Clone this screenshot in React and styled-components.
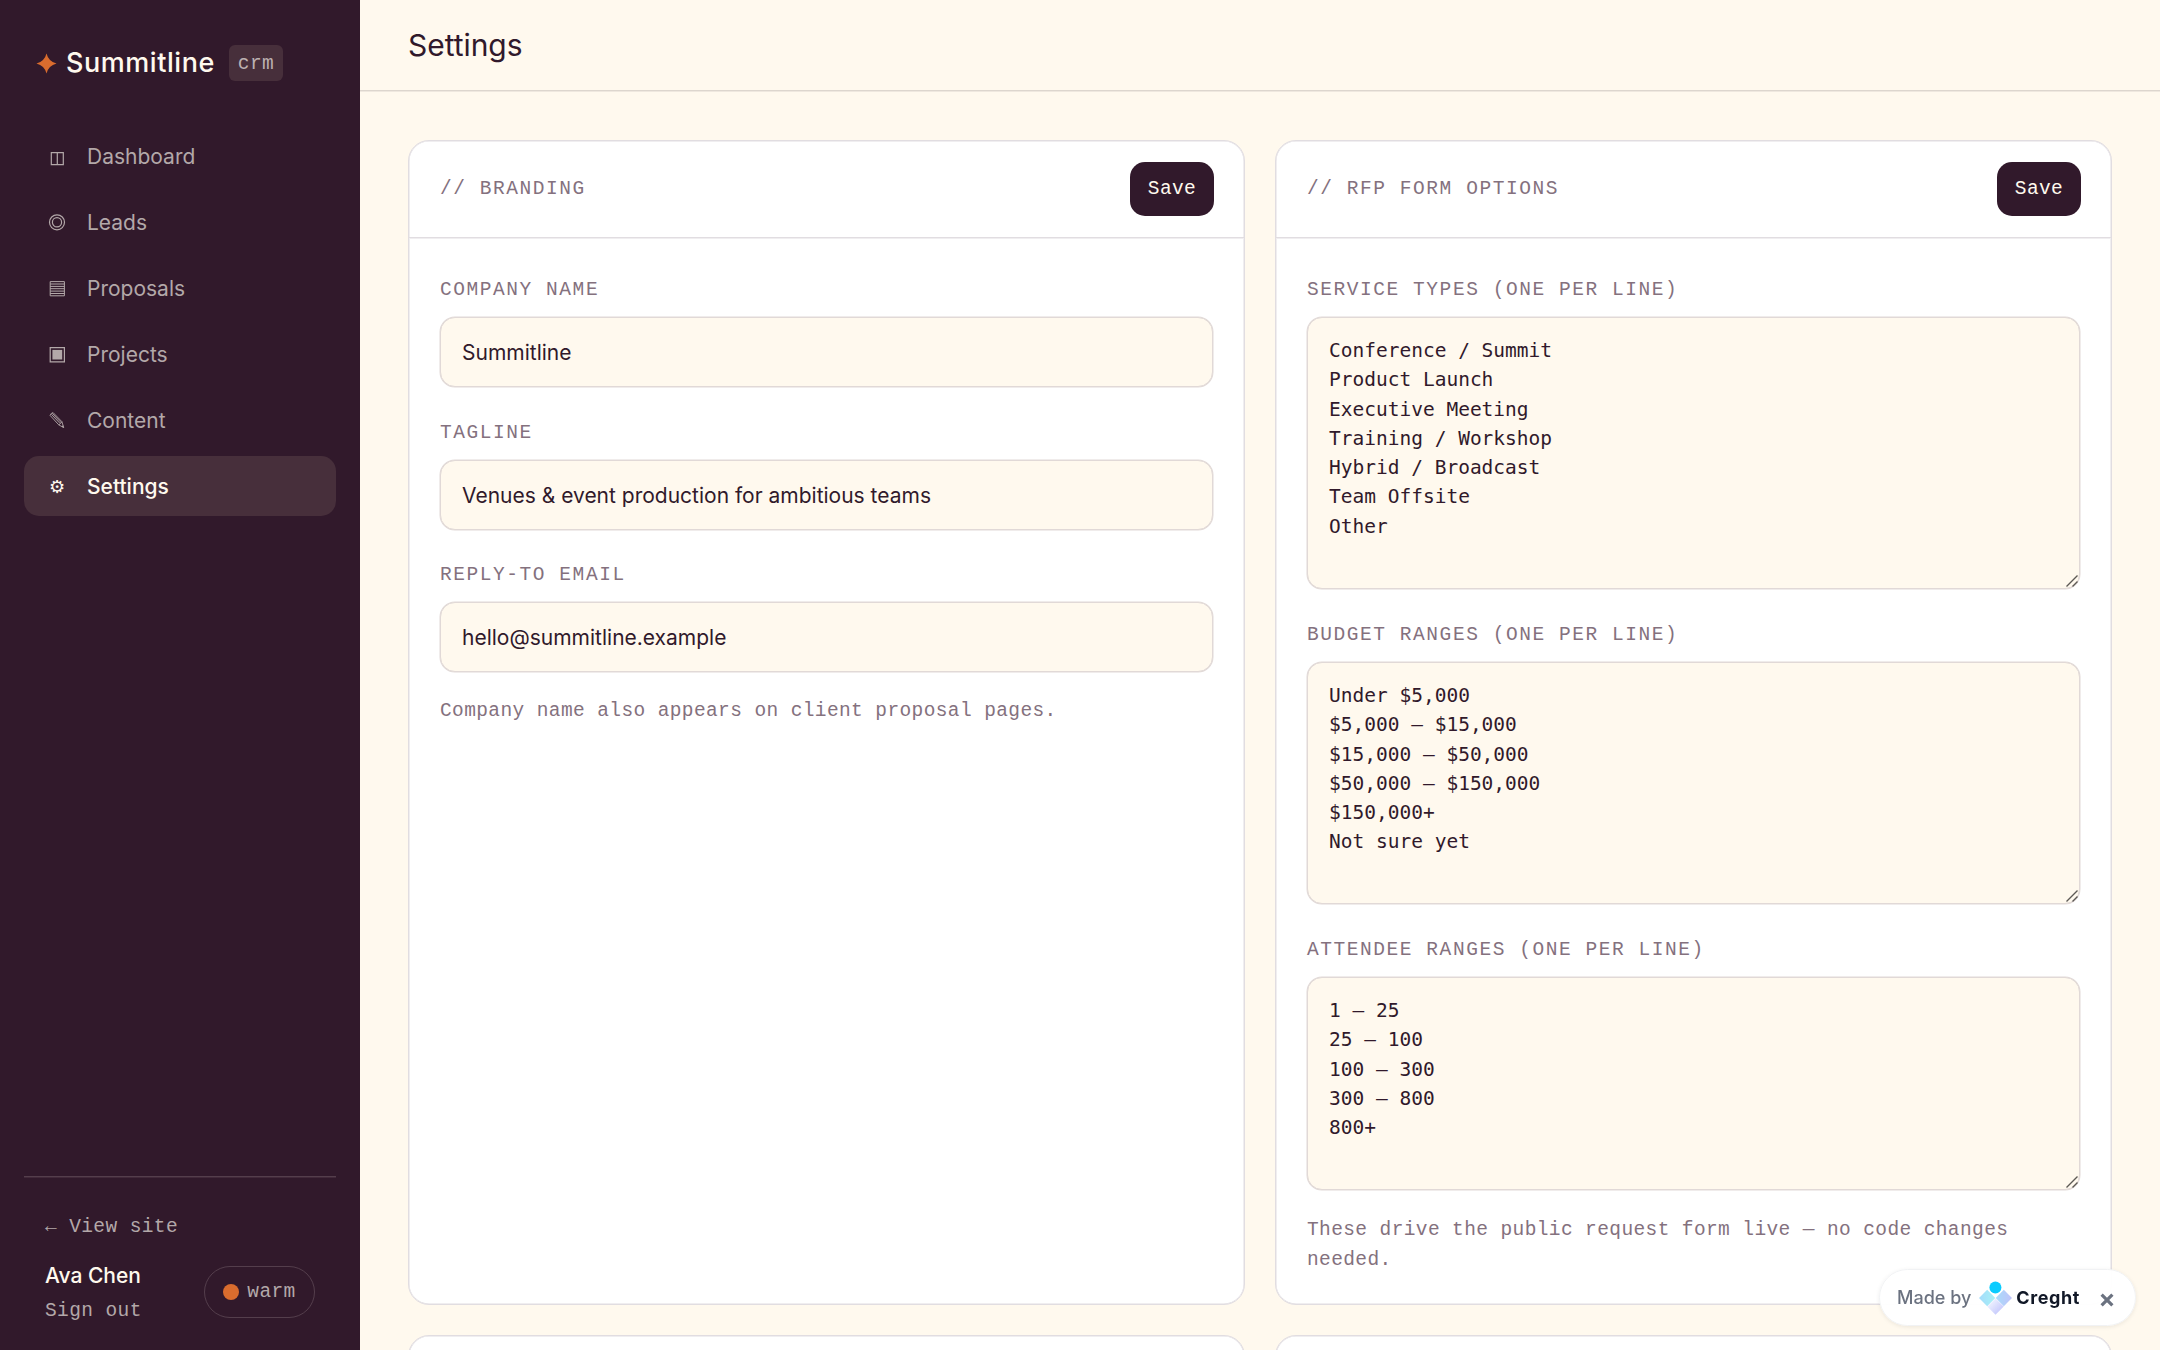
// Dependencies
import React from 'react';
import styled, { createGlobalStyle } from 'styled-components';

const GlobalStyle = createGlobalStyle`
  :root {
    --plum: #31192b;
    --cream: #fff9ee;
    --orange: #d96c2e;
    --muted: #84717e;
    --side-text: #b3a8a9;
    --line: #e1dde1;
    --sans: Inter, 'Liberation Sans', sans-serif;
    --display: Inter, 'Liberation Sans', sans-serif;
    --mono: 'Liberation Mono', monospace;
  }

  * {
    box-sizing: border-box;
  }

  body {
    margin: 0;
    background: var(--cream);
    color: var(--plum);
    font-family: var(--sans);
    -webkit-font-smoothing: antialiased;
  }
`;

const Layout = styled.div`
  display: flex;
  height: 1350px;
  overflow: hidden;
`;

const Sidebar = styled.aside`
  display: flex;
  flex-direction: column;
  flex: 0 0 360px;
  padding: 45px 24px 24px;
  background: var(--plum);
  color: var(--cream);
`;

const Brand = styled.div`
  display: flex;
  align-items: center;
  height: 36px;
  padding-left: 12px;
  margin-bottom: 45px;
`;

const Star = styled.svg`
  width: 21px;
  height: 21px;
  margin-right: 9px;
  fill: var(--orange);
`;

const BrandName = styled.span`
  width: 163px;
  padding-bottom: 2px;
  font-family: var(--display);
  font-size: 27px;
  font-weight: 500;
  letter-spacing: 0.55px;
`;

const Tag = styled.span`
  display: flex;
  align-items: center;
  justify-content: center;
  width: 54px;
  height: 36px;
  padding-top: 2px;
  border-radius: 6px;
  background: #472f3b;
  color: #bcb1b1;
  font-family: var(--mono);
  font-size: 19.5px;
  letter-spacing: 0.39px;
`;

const Nav = styled.nav`
  display: flex;
  flex-direction: column;
  gap: 6px;
`;

const NavItem = styled.a`
  display: flex;
  align-items: center;
  gap: 18px;
  height: 60px;
  padding: 0 21px;
  border-radius: 15px;
  background: ${({ $active }) => ($active ? '#472f3b' : 'transparent')};
  color: ${({ $active }) => ($active ? 'var(--cream)' : 'var(--side-text)')};
  font-size: 21px;
  font-weight: ${({ $active }) => ($active ? 500 : 400)};
`;

const NavIcon = styled.svg`
  width: 24px;
  height: 24px;
  fill: none;
  stroke: currentColor;
  stroke-width: 1.2;
`;

const NavGlyph = styled.span`
  width: 24px;
  font-family: 'DejaVu Sans', sans-serif;
  font-size: 18px;
  font-weight: 400;
  text-align: center;
`;

const SideFooter = styled.footer`
  display: flex;
  flex-direction: column;
  height: 150px;
  margin-top: auto;
  padding: 35px 21px 0;
  border-top: 1px solid #543e4c;
  box-shadow: inset 0 1px 0 #42293a;
`;

const SideLink = styled.a`
  color: var(--side-text);
  font-family: var(--mono);
  font-size: 19.5px;
  line-height: 30px;
  letter-spacing: 0.39px;
`;

const Account = styled.div`
  display: flex;
  align-items: center;
  justify-content: space-between;
  margin-top: 16px;
`;

const User = styled.div`
  display: flex;
  flex-direction: column;
  gap: 3px;
`;

const UserName = styled.span`
  font-size: 21px;
  font-weight: 500;
  line-height: 35px;
`;

const Theme = styled.button`
  display: flex;
  align-items: center;
  justify-content: center;
  gap: 8px;
  width: 111px;
  height: 52px;
  padding: 0;
  border: 1.5px solid #543e4c;
  border-radius: 26px;
  background: transparent;
  color: var(--side-text);
  font-family: var(--mono);
  font-size: 19.5px;
  letter-spacing: 0.39px;
`;

const Dot = styled.span`
  width: 16px;
  height: 16px;
  border-radius: 50%;
  background: var(--orange);
`;

const Page = styled.div`
  flex: 1;
  min-width: 0;
`;

const Topbar = styled.header`
  display: flex;
  align-items: center;
  height: 91px;
  padding: 0 48px;
  border-bottom: 1px solid #ddd6ce;
  box-shadow: 0 1px 0 #efe8df;
`;

const Title = styled.h1`
  margin: 0;
  font-family: var(--display);
  font-size: 30px;
  font-weight: 400;
  letter-spacing: -0.05px;
`;

const Content = styled.main`
  display: grid;
  grid-template-columns: 1fr 1fr;
  grid-template-rows: 1165px 300px;
  gap: 30px;
  padding: 49px 48px 0;
`;

const Panel = styled.section`
  border: 1px solid var(--line);
  border-radius: 21px;
  background: #fff;
  box-shadow: inset 0 0 0 0.5px var(--line);
`;

const PanelHead = styled.div`
  display: flex;
  align-items: center;
  justify-content: space-between;
  height: 97px;
  padding: 0 30px 0 31px;
  border-bottom: 1px solid var(--line);
  box-shadow: 0 1px 0 #f0eef0;
`;

const PanelTitle = styled.h2`
  margin: 0;
  color: var(--muted);
  font-family: var(--mono);
  font-size: 19.5px;
  font-weight: 400;
  letter-spacing: 1.56px;
  text-transform: uppercase;
`;

const Save = styled.button`
  width: 84px;
  height: 54px;
  padding: 0;
  border: none;
  border-radius: 15px;
  background: var(--plum);
  color: var(--cream);
  font-family: var(--mono);
  font-size: 19.5px;
  letter-spacing: 0.39px;
`;

const PanelBody = styled.div`
  padding: 37px 31px 30px;
`;

const Field = styled.label`
  display: block;
  margin-bottom: ${({ $gap }) => $gap}px;
`;

const Label = styled.span`
  display: block;
  height: 30px;
  margin-bottom: 12px;
  color: var(--muted);
  font-family: var(--mono);
  font-size: 19.5px;
  line-height: 30px;
  letter-spacing: 1.56px;
  text-transform: uppercase;
`;

const Input = styled.input`
  display: block;
  width: 100%;
  height: 70px;
  padding: 1px 21px 0;
  border: 1px solid #e1d9d7;
  border-radius: 15px;
  outline: none;
  background: var(--cream);
  box-shadow: 0 0 0 0.5px #e1d9d7;
  color: var(--plum);
  font-family: var(--sans);
  font-size: 21px;
`;

const AreaWrap = styled.div`
  position: relative;
`;

const Area = styled.textarea`
  display: block;
  width: 100%;
  height: ${({ $height }) => $height}px;
  padding: 18px 21px;
  overflow: hidden;
  resize: none;
  border: 1px solid #e1d9d7;
  border-radius: 15px;
  outline: none;
  background: var(--cream);
  box-shadow: 0 0 0 0.5px #e1d9d7;
  color: var(--plum);
  font-family: 'DejaVu Sans Mono', monospace;
  font-size: 19.5px;
  line-height: 29.25px;
`;

const Grip = styled.svg`
  position: absolute;
  right: 1px;
  bottom: 1px;
  width: 14px;
  height: 14px;
  fill: none;
  stroke: #5c5955;
  stroke-width: 1.4;
`;

const Hint = styled.p`
  margin: 0;
  color: var(--muted);
  font-family: var(--mono);
  font-size: 19.5px;
  line-height: 30.2px;
  letter-spacing: 0.39px;
`;

const MadeBy = styled.div`
  position: fixed;
  right: 24px;
  bottom: 24px;
  display: flex;
  align-items: center;
  width: 257px;
  height: 57px;
  padding-left: 17px;
  border: 1px solid #f1f2f4;
  border-radius: 29px;
  background: rgba(255, 255, 255, 0.96);
  box-shadow: 0 1px 4px rgba(0, 0, 0, 0.08);
  color: #6b7280;
  font-size: 18px;
  font-weight: 500;
`;

const MadeByMark = styled.svg`
  width: 33px;
  height: 34px;
  margin: 0 4px 0 8px;
`;

const MadeByName = styled.strong`
  width: 64px;
  margin-right: 20px;
  color: #111827;
  font-weight: 700;
  letter-spacing: 0.6px;
`;

const CloseIcon = styled.svg`
  width: 14px;
  height: 14px;
  margin-top: 5px;
  stroke: #6b7280;
  stroke-width: 3;
`;

const navItems = [
  {
    label: 'Dashboard',
    icon: <path d="M6.3 8.6h12v12h-12zM12.3 8.6v12" />
  },
  {
    label: 'Leads',
    icon: (
      <>
        <circle cx="12" cy="12.3" r="7.5" />
        <circle cx="12" cy="12.3" r="4.6" />
      </>
    )
  },
  {
    label: 'Proposals',
    icon: <path d="M5.2 5.6h14.2v14.2H5.2zM5.2 8h14.2M5.2 10.4h14.2M5.2 12.7h14.2M5.2 15.1h14.2M5.2 17.5h14.2" strokeWidth="1" />
  },
  {
    label: 'Projects',
    icon: (
      <>
        <path d="M5.2 5.6h14.2v14.2H5.2z" />
        <path d="M7.4 7.9h9.8v9.6H7.4z" fill="currentColor" stroke="none" />
      </>
    )
  },
  {
    label: 'Content',
    icon: (
      <>
        <path d="M5.1 7.4q.6-2.3 3-2.8l8.8 9.1 1.8 5.9-4.9-2.7zM6.4 6.3l8.8 9.3M7.3 5.3l8.8 9.3M13.8 16.9q1.8-1.2 3.1-3.2" strokeWidth="0.9" />
        <path d="M18.9 20l-2.4-1.4 1.6-1.3z" fill="currentColor" stroke="none" />
      </>
    )
  },
  { label: 'Settings', glyph: '⚙', active: true }
];

const branding = [
  { label: 'Company name', value: 'Summitline' },
  { label: 'Tagline', value: 'Venues & event production for ambitious teams' },
  { label: 'Reply-to email', value: 'hello@summitline.example' }
];

const formOptions = [
  {
    label: 'Service types (one per line)',
    height: 272,
    values: [
      'Conference / Summit', 'Product Launch', 'Executive Meeting', 'Training / Workshop',
      'Hybrid / Broadcast', 'Team Offsite', 'Other'
    ]
  },
  {
    label: 'Budget ranges (one per line)',
    height: 242,
    values: [
      'Under $5,000', '$5,000 — $15,000', '$15,000 — $50,000', '$50,000 — $150,000',
      '$150,000+', 'Not sure yet'
    ]
  },
  {
    label: 'Attendee ranges (one per line)',
    height: 213,
    values: ['1 — 25', '25 — 100', '100 — 300', '300 — 800', '800+']
  }
];

const CreghtMark = () => (
  <MadeByMark viewBox="0 0 33 34">
    <defs>
      <linearGradient id="left" x1="0" y1="0" x2="1" y2="0">
        <stop offset="0" stopColor="#a5dcfb" />
        <stop offset="1" stopColor="#a8f1f6" />
      </linearGradient>
      <linearGradient id="right" x1="0" y1="0" x2="1" y2="0">
        <stop offset="0" stopColor="#a9dcfa" />
        <stop offset="1" stopColor="#bfc3fa" />
      </linearGradient>
      <linearGradient id="bottom" x1="0" y1="0" x2="1" y2="1">
        <stop offset="0.2" stopColor="#eef1ff" />
        <stop offset="1" stopColor="#b9bdfb" />
      </linearGradient>
    </defs>
    <path d="M8.2 8.8 16.3 17 8.2 25.2 0 17z" fill="url(#left)" />
    <path d="M24.8 8.8 33 17l-8.2 8.2-8.1-8.2z" fill="url(#right)" />
    <path d="m16.5 17.4 8.2 8.2-8.2 8.2-8.2-8.2z" fill="url(#bottom)" />
    <circle cx="16.4" cy="6.4" r="6.6" fill="#fff" />
    <circle cx="16.4" cy="6.4" r="6" fill="#0accff" />
  </MadeByMark>
);

const App = () => {
  return (
    <Layout>
      <GlobalStyle />
      <Sidebar>
        <Brand>
          <Star viewBox="0 0 21 21">
            <path d="M10.5 .5Q12.5 8.5 20.5 10.5 12.5 12.5 10.5 20.5 8.5 12.5 .5 10.5 8.5 8.5 10.5 .5z" />
          </Star>
          <BrandName>Summitline</BrandName>
          <Tag>crm</Tag>
        </Brand>
        <Nav>
          {navItems.map(({ icon, glyph, label, active }) => (
            <NavItem key={label} $active={active}>
              {icon ? <NavIcon viewBox="0 0 24 24">{icon}</NavIcon> : <NavGlyph>{glyph}</NavGlyph>}
              {label}
            </NavItem>
          ))}
        </Nav>
        <SideFooter>
          <SideLink>← View site</SideLink>
          <Account>
            <User>
              <UserName>Ava Chen</UserName>
              <SideLink>Sign out</SideLink>
            </User>
            <Theme>
              <Dot />
              warm
            </Theme>
          </Account>
        </SideFooter>
      </Sidebar>
      <Page>
        <Topbar>
          <Title>Settings</Title>
        </Topbar>
        <Content>
          <Panel>
            <PanelHead>
              <PanelTitle>// Branding</PanelTitle>
              <Save>Save</Save>
            </PanelHead>
            <PanelBody>
              {branding.map(({ label, value }, i) => (
                <Field key={label} $gap={i === branding.length - 1 ? 24 : 30.5}>
                  <Label>{label}</Label>
                  <Input defaultValue={value} />
                </Field>
              ))}
              <Hint>Company name also appears on client proposal pages.</Hint>
            </PanelBody>
          </Panel>
          <Panel>
            <PanelHead>
              <PanelTitle>// RFP form options</PanelTitle>
              <Save>Save</Save>
            </PanelHead>
            <PanelBody>
              {formOptions.map(({ label, height, values }, i) => (
                <Field key={label} $gap={i === formOptions.length - 1 ? 25 : 31}>
                  <Label>{label}</Label>
                  <AreaWrap>
                    <Area $height={height} spellCheck={false} defaultValue={values.join('\n')} />
                    <Grip viewBox="0 0 14 14">
                      <path d="M1.5 12.5l11-11M7.5 12.5l5-5" />
                    </Grip>
                  </AreaWrap>
                </Field>
              ))}
              <Hint>These drive the public request form live — no code changes needed.</Hint>
            </PanelBody>
          </Panel>
          <Panel />
          <Panel />
        </Content>
      </Page>
      <MadeBy>
        Made by
        <CreghtMark />
        <MadeByName>Creght</MadeByName>
        <CloseIcon viewBox="0 0 13 13">
          <path d="M1.5 1.5l10 10M11.5 1.5l-10 10" />
        </CloseIcon>
      </MadeBy>
    </Layout>
  );
};

export default App;
